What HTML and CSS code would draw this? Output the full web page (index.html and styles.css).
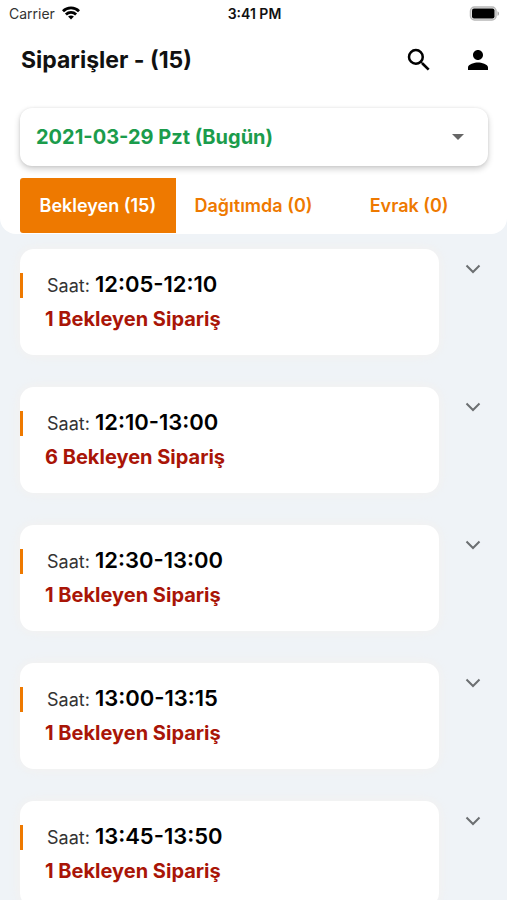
FILE: index.html
```html
<!DOCTYPE html>
<html lang="tr">
<head>
<meta charset="utf-8">
<meta name="viewport" content="width=device-width, initial-scale=1">
<title>Siparişler</title>
<link rel="stylesheet" href="styles.css">
</head>
<body>
<div class="app">
  <header class="top">
    <div class="status">
      <div class="carrier">
        <span>Carrier</span>
        <svg width="18" height="14" viewBox="0 0 18 14" fill="none" stroke="#000" stroke-width="2.8" aria-hidden="true">
          <path d="M1 5.2C5.4.8 12.6.8 17 5.2"/>
          <path d="M3.9 8.4c2.900-2.800 7.300-2.800 10.200 0"/>
          <path d="M9 13.6 6.1 10.6c1.7-1.5 4.1-1.5 5.8 0z" fill="#000" stroke="none"/>
        </svg>
      </div>
      <span class="clock">3:41 PM</span>
      <svg class="battery" width="31" height="15" viewBox="0 0 31 15" aria-hidden="true">
        <rect x="1.500" y="1" width="25.500" height="13" rx="4" fill="#eee" stroke="#b8b8b8" stroke-width="1.500"/>
        <rect x="3" y="2.500" width="22.500" height="10" rx="2" fill="#000"/>
        <path d="M28.5 5.2c2 .8 2 3.8 0 4.6z" fill="#a8a8a8"/>
      </svg>
    </div>
    <div class="titlebar">
      <h1>Siparişler - (15)</h1>
      <div class="actions">
        <button type="button" aria-label="Ara">
          <svg width="30" height="30" viewBox="0 0 24 24"><path d="M15.5 14h-.79l-.28-.27A6.47 6.47 0 0 0 16 9.5 6.5 6.5 0 1 0 9.5 16c1.61 0 3.09-.59 4.23-1.57l.27.28v.79l5 4.99L20.490 19zM9.500 14a4.500 4.500 0 1 1 0-9 4.500 4.500 0 0 1 0 9z"/></svg>
        </button>
        <button type="button" aria-label="Profil">
          <svg width="30" height="30" viewBox="0 0 24 24"><path d="M12 12c2.210 0 4-1.790 4-4s-1.790-4-4-4-4 1.790-4 4 1.790 4 4 4zm0 2c-2.670 0-8 1.340-8 4v2h16v-2c0-2.660-5.330-4-8-4z"/></svg>
        </button>
      </div>
    </div>
    <div class="date">
      <select aria-label="Tarih">
        <option>2021-03-29 Pzt (Bugün)</option>
      </select>
      <svg width="12" height="6" viewBox="0 0 12 6" aria-hidden="true"><path d="M0 0h12L6 6z" fill="#666"/></svg>
    </div>
    <div class="tabs" role="tablist">
      <button type="button" role="tab" aria-selected="true">Bekleyen (15)</button>
      <button type="button" role="tab" aria-selected="false">Dağıtımda (0)</button>
      <button type="button" role="tab" aria-selected="false">Evrak (0)</button>
    </div>
  </header>
  <main class="slots">
    <section class="slot">
      <div class="card">
        <p class="time">Saat: <strong>12:05-12:10</strong></p>
        <p class="count">1 Bekleyen Sipariş</p>
      </div>
      <button class="expand" type="button" aria-label="Aç"><svg width="16" height="10" viewBox="0 0 16 10"><path d="m1.500 1.500 6.500 6.500 6.500-6.500"/></svg></button>
    </section>
    <section class="slot">
      <div class="card">
        <p class="time">Saat: <strong>12:10-13:00</strong></p>
        <p class="count">6 Bekleyen Sipariş</p>
      </div>
      <button class="expand" type="button" aria-label="Aç"><svg width="16" height="10" viewBox="0 0 16 10"><path d="m1.500 1.500 6.500 6.500 6.500-6.500"/></svg></button>
    </section>
    <section class="slot">
      <div class="card">
        <p class="time">Saat: <strong>12:30-13:00</strong></p>
        <p class="count">1 Bekleyen Sipariş</p>
      </div>
      <button class="expand" type="button" aria-label="Aç"><svg width="16" height="10" viewBox="0 0 16 10"><path d="m1.500 1.500 6.500 6.500 6.500-6.500"/></svg></button>
    </section>
    <section class="slot">
      <div class="card">
        <p class="time">Saat: <strong>13:00-13:15</strong></p>
        <p class="count">1 Bekleyen Sipariş</p>
      </div>
      <button class="expand" type="button" aria-label="Aç"><svg width="16" height="10" viewBox="0 0 16 10"><path d="m1.500 1.500 6.500 6.500 6.500-6.500"/></svg></button>
    </section>
    <section class="slot">
      <div class="card">
        <p class="time">Saat: <strong>13:45-13:50</strong></p>
        <p class="count">1 Bekleyen Sipariş</p>
      </div>
      <button class="expand" type="button" aria-label="Aç"><svg width="16" height="10" viewBox="0 0 16 10"><path d="m1.500 1.500 6.500 6.500 6.500-6.500"/></svg></button>
    </section>
  </main>
</div>
</body>
</html>
```
FILE: styles.css
```css
* { box-sizing: border-box; }

body {
  margin: 0;
  background: #eff3f7;
  color: #111;
  font-family: Inter, Roboto, "Liberation Sans", sans-serif;
}

button, select {
  font: inherit;
  border: 0;
  padding: 0;
  background: none;
  cursor: pointer;
}

h1, p { margin: 0; }
svg { display: block; }

.app {
  display: flex;
  flex-direction: column;
  height: 100vh;
}

.top {
  flex: none;
  background: #fff;
  border-radius: 0 0 16px 16px;
}

.status {
  display: grid;
  grid-template-columns: 1fr auto 1fr;
  align-items: center;
  height: 28px;
  padding: 0 7px 2px 9px;
  font-size: 14px;
}

.carrier {
  display: flex;
  align-items: center;
  gap: 7px;
  color: #333;
}

.clock { font-weight: 600; }
.battery { justify-self: end; }

.titlebar {
  display: flex;
  align-items: center;
  justify-content: space-between;
  height: 64px;
  padding: 0 14px 0 21px;
}

h1 {
  font-size: 23px;
  line-height: 28px;
  font-weight: 700;
}

.actions {
  display: flex;
  gap: 29px;
}

.date {
  display: flex;
  align-items: center;
  margin: 16px 19px 12px 20px;
  height: 58px;
  padding-right: 24px;
  border-radius: 12px;
  background: #fff;
  box-shadow: 0 3px 6px rgba(0, 0, 0, 0.2), 0 0 3px rgba(0, 0, 0, 0.08);
}

.date select {
  flex: 1;
  min-width: 0;
  height: 100%;
  padding-left: 16px;
  appearance: none;
  color: #1b9c4c;
  font-size: 20px;
  font-weight: 700;
}

.tabs {
  display: grid;
  grid-template-columns: repeat(3, 1fr);
  height: 56px;
  padding: 0 20px 1px;
}

.tabs button {
  color: #ee7900;
  font-size: 18px;
  font-weight: 600;
  white-space: nowrap;
}

.tabs [aria-selected="true"] {
  background: #ee7900;
  color: #fff;
  border-radius: 3px 0 0 3px;
}

.slots {
  flex: 1;
  min-height: 0;
  overflow-y: auto;
  scrollbar-width: none;
  display: flex;
  flex-direction: column;
  gap: 32px;
  padding: 15px 19px 32px 20px;
}

.slot {
  flex: none;
  display: flex;
  align-items: flex-start;
}

.card {
  flex: 1;
  padding: 24px 0 20px;
  border-radius: 14px;
  background: #fff;
  box-shadow: 0 0 12px rgba(255, 240, 225, 0.4);
}

.time {
  padding-left: 24px;
  border-left: 3px solid #ee7900;
  color: #333;
  font-size: 18px;
  line-height: 25px;
}

.time strong {
  color: #000;
  font-size: 22px;
  line-height: 20px;
  font-weight: 600;
}

.count {
  margin-top: 5px;
  padding-left: 25px;
  color: #a91507;
  font-size: 20px;
  line-height: 32px;
  font-weight: 700;
}

.expand {
  width: 30px;
  height: 40px;
  margin-left: 19px;
  display: grid;
  place-items: center;
}

.expand path {
  fill: none;
  stroke: #6c6f72;
  stroke-width: 2;
}
```
